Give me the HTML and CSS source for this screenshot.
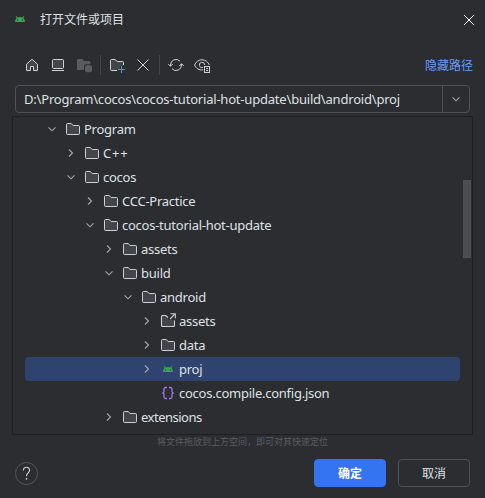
FILE: index.html
```html
<!DOCTYPE html>
<html lang="zh-CN">
<head>
<meta charset="utf-8">
<title>打开文件或项目</title>
<link rel="stylesheet" href="styles.css">
</head>
<body>
<svg class="defs" width="0" height="0">
  <symbol id="folder" viewBox="0 0 16 16"><path d="M1.5 3.5Q1.5 2.5 2.5 2.5H6.1L8.2 4.5H13.5Q14.5 4.5 14.5 5.5V12.5Q14.5 13.5 13.5 13.5H2.5Q1.5 13.5 1.5 12.5Z" fill="#43454a" stroke="#ced0d6"/></symbol>
  <symbol id="link" viewBox="0 0 16 16"><path d="M7.5 4.5L6 2.5H2.5Q1.5 2.5 1.5 3.5V12.5Q1.5 13.5 2.5 13.5H13.5Q14.5 13.5 14.5 12.5V7.5L12 6L9 7.5Z" fill="#43454a"/><path d="M8 4.500L5.800 2.500H2.500Q1.500 2.500 1.500 3.500V12.500Q1.500 13.500 2.500 13.500H13.500Q14.500 13.500 14.500 12.500V7.500M10.500 .7H15.300V5.500M15.300 .7L10 6" fill="none" stroke="#ced0d6" stroke-width="1.1"/></symbol>
  <symbol id="android" viewBox="0 0 16 16"><path d="M3 11C3 9.200 3.700 7.900 4.700 7L3.500 5.400L4.200 4.900L5.700 6.400Q8 5.700 10.300 6.400L11.800 4.900L12.500 5.400L11.300 7C12.300 7.900 13 9.200 13 11Z" fill="#34a853"/><circle cx="5.600" cy="9" r=".7" fill="#2b4b3c"/><circle cx="10.400" cy="9" r=".7" fill="#2b4b3c"/></symbol>
  <symbol id="json" viewBox="0 0 16 16"><path d="M7 2.500H5.500Q4 2.500 4 4V6.500Q4 8 2.300 8Q4 8 4 9.500V12Q4 13.500 5.500 13.500H7M9 2.500H10.500Q12 2.500 12 4V6.500Q12 8 13.700 8Q12 8 12 9.500V12Q12 13.500 10.500 13.500H9" fill="none" stroke="#a571e6" stroke-width="1.3"/></symbol>
  <symbol id="right" viewBox="0 0 16 16"><path d="M6 4.500L9.500 8L6 11.500" fill="none" stroke="#a4a7ae" stroke-width="1.1"/></symbol>
  <symbol id="down" viewBox="0 0 16 16"><path d="M4.500 6.300L8 9.800L11.500 6.300" fill="none" stroke="#a4a7ae" stroke-width="1.1"/></symbol>
</svg>
<div class="dialog">
  <header class="titlebar">
    <svg class="app" viewBox="0 0 16 16"><use href="#android"/></svg>
    <h1>打开文件或项目</h1>
    <svg class="close" viewBox="0 0 12 12"><path d="M1 1L11 11M11 1L1 11" stroke="#fff"/></svg>
  </header>
  <div class="toolbar">
    <svg viewBox="0 0 16 16"><path d="M2.500 7.200L8 2.300L13.500 7.200V13.500H9.500V9.500H6.500V13.500H2.500Z" fill="#43454a" stroke="#ced0d6" stroke-linejoin="round"/></svg>
    <svg viewBox="0 0 16 16"><rect x="2.500" y="2.500" width="11" height="9" rx="1" fill="#43454a" stroke="#ced0d6"/><path d="M2 13.500H14" stroke="#ced0d6"/></svg>
    <svg viewBox="0 0 16 16"><path d="M1 3Q1 2 2 2H6.300L8.300 4H13Q14.500 4 14.500 5.500V7.300H10Q8 7.300 8 9.300V13H2Q1 13 1 12Z" fill="#5a5b5d"/><rect x="9" y="8.300" width="7" height="7" rx="2" fill="#5a5b5d"/></svg>
    <span class="sep"></span>
    <svg viewBox="0 0 16 16"><path d="M1.500 3.500Q1.500 2.500 2.500 2.500H6.100L8.200 4.500H13.500Q14.500 4.500 14.500 5.500V9H11V12H8.500V13.500H2.500Q1.500 13.500 1.500 12.500Z" fill="#43454a"/><path d="M8 13.500H2.500Q1.500 13.500 1.500 12.500V3.500Q1.500 2.500 2.500 2.500H6.100L8.200 4.500H13.500Q14.500 4.500 14.500 5.500V8" fill="none" stroke="#ced0d6"/><path d="M12.500 9V16M9 12.500H16" stroke="#548af7"/></svg>
    <svg viewBox="0 0 16 16"><path d="M2.500 2.500L13.500 13.500M13.500 2.500L2.500 13.500" stroke="#ced0d6"/></svg>
    <span class="sep"></span>
    <svg viewBox="0 0 16 16"><path d="M2.500 9V8A5.500 5.500 0 0 1 12 4.200M13.500 7V8A5.500 5.500 0 0 1 4 11.800M.3 7L2.500 9.300L4.700 7M11.300 9L13.500 6.700L15.700 9" fill="none" stroke="#ced0d6"/></svg>
    <svg viewBox="0 0 16 16"><path d="M9 12.900C5 13.400 2 11.500 .6 8C3.500 1 12.500 1 15.400 8" fill="none" stroke="#ced0d6"/><path d="M9 10.300A2.600 2.600 0 1 1 10.600 8" fill="none" stroke="#ced0d6"/><rect x="10.500" y="9.500" width="5" height="6" fill="#2b2d30" stroke="#ced0d6"/><path d="M12 11.500H14M12 13.500H14" stroke="#ced0d6"/></svg>
    <a class="hide-path">隐藏路径</a>
  </div>
  <div class="path">
    <span class="value">D:\Program\cocos\cocos-tutorial-hot-update\build\android\proj</span>
    <span class="drop"><svg viewBox="0 0 16 16"><use href="#down"/></svg></span>
  </div>
  <div class="tree">
    <div class="row l0"><svg><use href="#down"/></svg><svg><use href="#folder"/></svg><span>Program</span></div>
    <div class="row l1"><svg><use href="#right"/></svg><svg><use href="#folder"/></svg><span class="wide">C++</span></div>
    <div class="row l1"><svg><use href="#down"/></svg><svg><use href="#folder"/></svg><span>cocos</span></div>
    <div class="row l2"><svg><use href="#right"/></svg><svg><use href="#folder"/></svg><span>CCC-Practice</span></div>
    <div class="row l2"><svg><use href="#down"/></svg><svg><use href="#folder"/></svg><span>cocos-tutorial-hot-update</span></div>
    <div class="row l3"><svg><use href="#right"/></svg><svg><use href="#folder"/></svg><span>assets</span></div>
    <div class="row l3"><svg><use href="#down"/></svg><svg><use href="#folder"/></svg><span>build</span></div>
    <div class="row l4"><svg><use href="#down"/></svg><svg><use href="#folder"/></svg><span>android</span></div>
    <div class="row l5"><svg><use href="#right"/></svg><svg><use href="#link"/></svg><span>assets</span></div>
    <div class="row l5"><svg><use href="#right"/></svg><svg><use href="#folder"/></svg><span>data</span></div>
    <div class="row l5 selected"><svg><use href="#right"/></svg><svg><use href="#android"/></svg><span>proj</span></div>
    <div class="row l5"><svg></svg><svg><use href="#json"/></svg><span>cocos.compile.config.json</span></div>
    <div class="row l3"><svg><use href="#right"/></svg><svg><use href="#folder"/></svg><span class="tight">extensions</span></div>
    <div class="thumb"></div>
  </div>
  <p class="hint">将文件拖放到上方空间，即可对其快速定位</p>
  <footer>
    <span class="help"><svg viewBox="0 0 24 24"><path d="M8.500 8.500C8.500 3.700 15.500 3.700 15.500 8.300C15.500 11.300 12 11.300 12 15" fill="none" stroke="#ced0d6" stroke-width="1.300"/><circle cx="12" cy="18" r="1" fill="#ced0d6"/></svg></span>
    <button class="ok">确定</button>
    <button class="cancel">取消</button>
  </footer>
</div>
</body>
</html>
```
FILE: styles.css
```css
* { box-sizing: border-box; }
body {
  margin: 0;
  background: #2b2d30;
  color: #dfe1e5;
  font: 13px/24px "Noto Sans", "Noto Sans CJK SC", sans-serif;
}
.defs { position: absolute; }
.dialog {
  display: flex;
  flex-direction: column;
  width: 485px;
  height: 498px;
  overflow: hidden;
}
svg { display: block; flex: none; }
.titlebar {
  display: flex;
  align-items: center;
  height: 40px;
  padding: 0 10px 0 12px;
}
.app { width: 16px; height: 16px; margin-top: -2px; }
h1 { flex: 1; margin: 0 0 0 12px; font-size: 12px; font-weight: 400; }
.close { width: 12px; height: 12px; }
.toolbar {
  display: flex;
  align-items: center;
  gap: 10px;
  height: 20px;
  margin: 15px 12px 10px 24px;
}
.toolbar svg { width: 16px; height: 16px; overflow: visible; }
.sep { width: 1px; height: 20px; margin: 0 -2px; background: #43454a; }
.hide-path { margin-left: auto; padding-top: 2px; color: #6b9bfa; font-size: 12px; }
.path {
  display: flex;
  height: 28px;
  margin: 0 15px;
  border: 1px solid #4e5157;
  border-radius: 4px;
}
.value {
  flex: 1;
  padding-left: 8px;
  line-height: 26px;
  letter-spacing: -0.2px;
  white-space: nowrap;
}
.drop {
  display: flex;
  align-items: center;
  justify-content: center;
  width: 27px;
  border-left: 1px solid #4e5157;
}
.drop svg { width: 16px; height: 16px; }
.tree {
  position: relative;
  height: 319px;
  margin: 3px 12px 0;
  border: 1px solid #1e1f22;
}
.row {
  display: flex;
  align-items: center;
  height: 24px;
  margin: 0 12px;
  letter-spacing: -0.25px;
  white-space: nowrap;
}
.row .wide { letter-spacing: 0.8px; }
.row .tight { letter-spacing: -0.5px; }
.row svg { width: 16px; height: 16px; }
.row svg + svg { margin: 0 3px 0 5px; overflow: visible; }
.l0 { padding-left: 19px; }
.l1 { padding-left: 38px; }
.l2 { padding-left: 57px; }
.l3 { padding-left: 76px; }
.l4 { padding-left: 95px; }
.l5 { padding-left: 114px; }
.selected { background: #2e436e; border-radius: 4px; }
.thumb {
  position: absolute;
  top: 63px;
  right: 1px;
  width: 8px;
  height: 78px;
  background: #4d4e51;
}
.hint {
  height: 16px;
  margin: 0;
  color: #5a5d63;
  font-size: 9px;
  line-height: 14px;
  text-align: center;
}
footer {
  display: flex;
  align-items: center;
  gap: 12px;
  height: 28px;
  margin: 8px 15px 0;
}
.help {
  display: grid;
  place-items: center;
  width: 23px;
  height: 23px;
  margin-right: auto;
  border: 1px solid #53565b;
  border-radius: 50%;
}
.help svg { width: 21px; height: 21px; }
button {
  width: 72px;
  height: 28px;
  padding: 0;
  border: 1px solid #4e5157;
  border-radius: 4px;
  background: transparent;
  color: #dfe1e5;
  font: 12px/26px "Noto Sans CJK SC", sans-serif;
}
.ok { border-color: #3574f0; background: #3574f0; color: #fff; font-weight: 700; }
```
